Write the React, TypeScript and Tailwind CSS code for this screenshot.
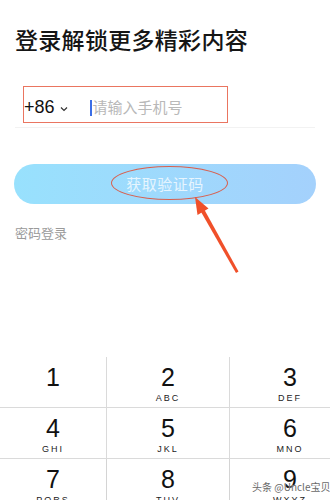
import React from 'react';

const keys = [
  { d: '1', l: '' },
  { d: '2', l: 'ABC' },
  { d: '3', l: 'DEF' },
  { d: '4', l: 'GHI' },
  { d: '5', l: 'JKL' },
  { d: '6', l: 'MNO' },
  { d: '7', l: 'PQRS' },
  { d: '8', l: 'TUV' },
  { d: '9', l: 'WXYZ' },
];

export default function App() {
  return (
    <div
      className="relative w-[330px] h-[500px] overflow-hidden bg-white"
      style={{ fontFamily: '"Noto Sans CJK SC", "Noto Sans", sans-serif' }}
    >
      {/* Title */}
      <h1 className="pl-[15px] pt-[22px] text-[23px] leading-[34px] font-medium text-[#151515] tracking-[0.3px]">
        登录解锁更多精彩内容
      </h1>

      {/* Phone input */}
      <div className="relative mx-[15px] mt-[32px] h-[40px] flex items-center border-b border-[#f2f2f2]">
        <span
          className="ml-[9px] text-[18px] text-[#111]"
          style={{ fontFamily: '"Liberation Sans", Arial, sans-serif' }}
        >
          +86
        </span>
        <svg width="8" height="6" viewBox="0 0 8 6" className="ml-[5px] mt-[2px]">
          <path d="M1 1.5 L4 4.5 L7 1.5" stroke="#333" strokeWidth="1.2" fill="none" />
        </svg>
        <span className="ml-[22px] w-[2px] h-[16px] bg-[#3c6ee6]" />
        <span className="ml-[1px] text-[15px] text-[#b8b8b8]">请输入手机号</span>
        {/* red annotation box */}
        <div className="absolute left-[8px] top-[-2px] w-[205px] h-[37px] border-[1.5px] border-[#ea7560]" />
      </div>

      {/* Get code button */}
      <div className="relative mx-[14px] mt-[36px] h-[40px] rounded-full bg-gradient-to-r from-[#98e1fd] to-[#a4d1fc] flex items-center justify-center">
        <span className="text-[15px] text-white/75 tracking-[0.5px]">获取验证码</span>
        <div className="absolute left-[97px] top-[2px] w-[117px] h-[34px] rounded-[50%] border-[1.5px] border-[#d8604f]" />
      </div>

      <div className="pl-[15px] mt-[20px] text-[13px] leading-[18px] text-[#9a9a9a]">密码登录</div>

      {/* Keypad */}
      <div className="absolute left-0 top-[357px] w-[350px] grid grid-cols-[107px_123px_120px]">
        {keys.map((k, i) => (
          <div
            key={k.d}
            className={`h-[51px] flex flex-col items-center pt-[5px] ${i % 3 !== 2 ? 'border-r border-[#d4d4d4]' : ''} ${i < 6 ? 'border-b border-[#dadada]' : ''}`}
          >
            <span
              className="text-[25px] leading-[30px] text-[#111]"
              style={{ fontFamily: '"Liberation Sans", Arial, sans-serif' }}
            >
              {k.d}
            </span>
            {k.l && (
              <span
                className="text-[9px] leading-[11px] tracking-[2px] text-[#222] mt-[1px]"
                style={{ fontFamily: '"Liberation Sans", Arial, sans-serif' }}
              >
                {k.l}
              </span>
            )}
          </div>
        ))}
      </div>

      {/* Arrow annotation */}
      <svg className="absolute left-0 top-0" width="330" height="500" viewBox="0 0 330 500">
        <polygon points="236,273 238.5,271.5 204,209 200.5,211" fill="#f0502a" />
        <polygon points="195,197 208.5,208.5 197.5,215" fill="#f0502a" />
      </svg>

      {/* Watermark */}
      <div
        className="absolute left-[252px] top-[481px] whitespace-nowrap text-[10px] leading-[12px] text-[#6a6a6a]"
        style={{ textShadow: '0 0 1px #fff' }}
      >
        头条 @Uncle宝贝
      </div>
    </div>
  );
}
